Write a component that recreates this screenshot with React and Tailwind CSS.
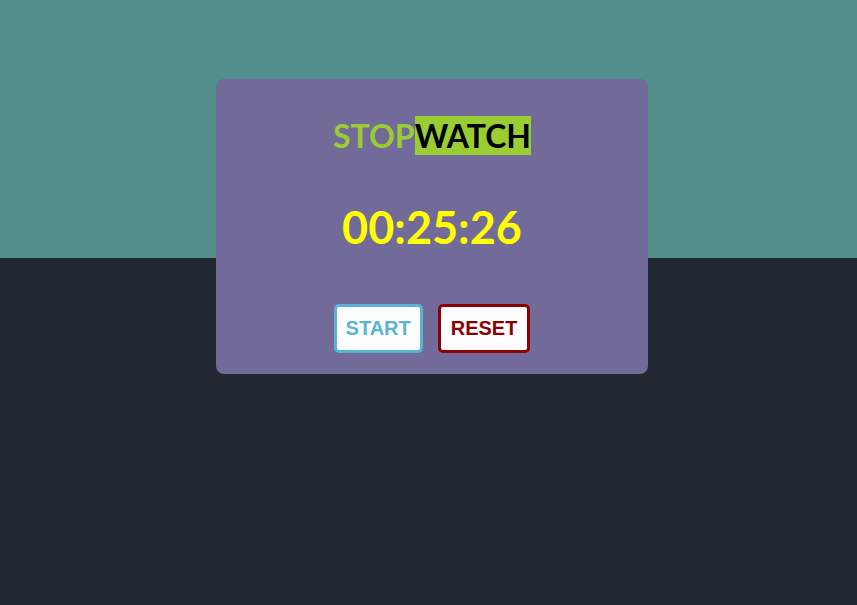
import React, { useState } from 'react';

const App = () => {
  const [time] = useState('00:25:26');

  return (
    <div className="min-h-[605px] w-full bg-[linear-gradient(to_bottom,#508d8b_258px,#222831_258px)] pt-[79px] font-['Lato',sans-serif]">
      <div className="ml-[216px] flex w-[432px] flex-col items-center rounded-lg bg-[#726a99] pt-[37px] pb-[21px]">
        <h1 className="text-[32px] font-bold leading-[39px] text-[#9acd32]">
          STOP<span className="bg-[#9acd32] text-black">WATCH</span>
        </h1>
        <div className="mt-[45px] text-[45px] font-bold leading-[54px] text-[#ffff00]">{time}</div>
        <div className="mt-[50px] flex gap-[15px] font-['Liberation_Sans',Arial,sans-serif]">
          <button className="rounded-[5px] border-[3px] border-[#58b3d5] bg-white px-[9px] py-[10px] text-[20px] font-bold leading-[23px] text-[#58b3d5]">
            START
          </button>
          <button className="rounded-[5px] border-[3px] border-[#8b0000] bg-white px-[10px] py-[10px] text-[20px] font-bold leading-[23px] text-[#8b0000]">
            RESET
          </button>
        </div>
      </div>
    </div>
  );
};

export default App;
